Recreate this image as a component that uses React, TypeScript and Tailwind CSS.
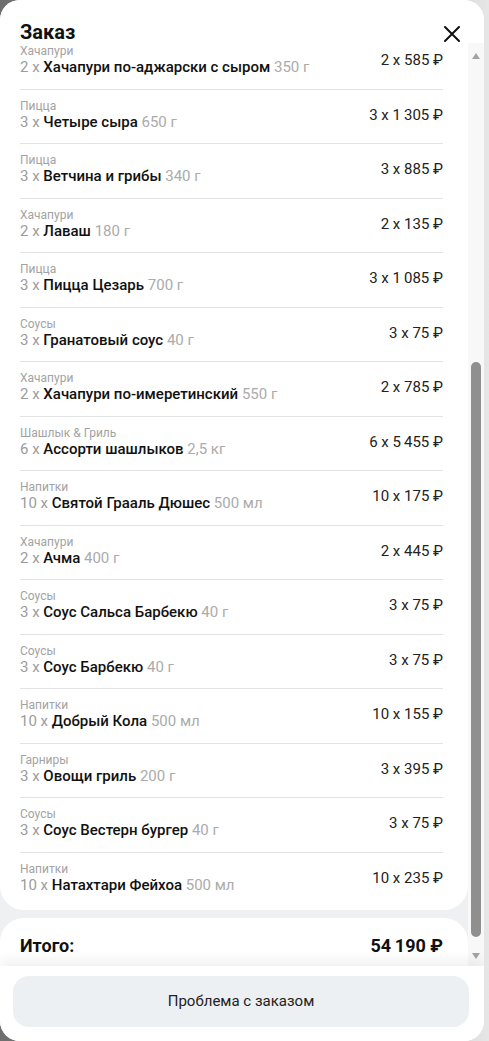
import { useLayoutEffect, useRef } from "react";

type Item = {
  cat: string;
  qty: number;
  name: string;
  weight: string;
  price: string;
};

const items: Item[] = [
  { cat: "Хачапури", qty: 2, name: "Хачапури по-аджарски с сыром", weight: "350 г", price: "585" },
  { cat: "Пицца", qty: 3, name: "Четыре сыра", weight: "650 г", price: "1\u2009305" },
  { cat: "Пицца", qty: 3, name: "Ветчина и грибы", weight: "340 г", price: "885" },
  { cat: "Хачапури", qty: 2, name: "Лаваш", weight: "180 г", price: "135" },
  { cat: "Пицца", qty: 3, name: "Пицца Цезарь", weight: "700 г", price: "1\u2009085" },
  { cat: "Соусы", qty: 3, name: "Гранатовый соус", weight: "40 г", price: "75" },
  { cat: "Хачапури", qty: 2, name: "Хачапури по-имеретинский", weight: "550 г", price: "785" },
  { cat: "Шашлык & Гриль", qty: 6, name: "Ассорти шашлыков", weight: "2,5 кг", price: "5\u2009455" },
  { cat: "Напитки", qty: 10, name: "Святой Грааль Дюшес", weight: "500 мл", price: "175" },
  { cat: "Хачапури", qty: 2, name: "Ачма", weight: "400 г", price: "445" },
  { cat: "Соусы", qty: 3, name: "Соус Сальса Барбекю", weight: "40 г", price: "75" },
  { cat: "Соусы", qty: 3, name: "Соус Барбекю", weight: "40 г", price: "75" },
  { cat: "Напитки", qty: 10, name: "Добрый Кола", weight: "500 мл", price: "155" },
  { cat: "Гарниры", qty: 3, name: "Овощи гриль", weight: "200 г", price: "395" },
  { cat: "Соусы", qty: 3, name: "Соус Вестерн бургер", weight: "40 г", price: "75" },
  { cat: "Напитки", qty: 10, name: "Натахтари Фейхоа", weight: "500 мл", price: "235" },
];

function Row({ item, last }: { item: Item; last: boolean }) {
  return (
    <div
      className={
        "flex items-center justify-between pt-[9px] pb-[12.5px] " +
        (last ? "" : "border-b border-[#e3e3e3]")
      }
    >
      <div className="flex flex-col">
        <span className="text-[12px] leading-[14px] text-[#a3a3a3]">{item.cat}</span>
        <span className="text-[15px] leading-[18px] text-[#9c9c9c]">
          {item.qty} x <span className="font-medium text-[#111]">{item.name}</span>{" "}
          <span className="text-[#ababab]">{item.weight}</span>
        </span>
      </div>
      <span className="text-[15px] leading-[18px] text-[#222] whitespace-nowrap">
        {item.qty} x {item.price} ₽
      </span>
    </div>
  );
}

// classic scrollbar look, drawn beside the list
function ScrollTrack() {
  return (
    <div className="w-[16px] shrink-0 bg-[#f8f8f8] flex flex-col items-center pt-[10px]">
      <div className="w-0 h-0 border-x-[4.5px] border-x-transparent border-b-[6px] border-b-[#a3a3a3]" />
      <div className="mt-[303px] w-[10px] h-[575px] rounded-full bg-[#8f8f8f]" />
      <div className="mt-[16px] w-0 h-0 border-x-[4.5px] border-x-transparent border-t-[6px] border-t-[#a3a3a3]" />
    </div>
  );
}

export default function App() {
  const scrollRef = useRef<HTMLDivElement>(null);

  useLayoutEffect(() => {
    const el = scrollRef.current;
    if (el) el.scrollTop = el.scrollHeight; // list is shown scrolled to the end
  }, []);

  return (
    <div
      className="h-[1041px] w-full bg-gradient-to-r from-[#6e6e6e] to-[#e6e6e6] flex"
      style={{ fontFamily: "Roboto, 'Noto Sans', sans-serif" }}
    >
      <div className="w-[484px] h-full bg-white rounded-[20px] overflow-hidden flex flex-col">
        {/* ---- Header ---- */}
        <div className="h-[43px] shrink-0 flex justify-between items-start pl-5 pr-[24px] bg-white">
          <h1 className="pt-[23px] text-[20px] leading-[18px] font-bold text-[#111]">Заказ</h1>
          <svg className="mt-[26px]" width="16" height="16" viewBox="0 0 16 16" fill="none">
            <path d="M1 1L15 15M15 1L1 15" stroke="#111" strokeWidth="2" strokeLinecap="round" />
          </svg>
        </div>

        {/* ---- Body ---- */}
        <div className="flex-1 min-h-0 flex">
          <div
            ref={scrollRef}
            className="flex-1 min-w-0 overflow-y-scroll bg-[#eef0f2] [scrollbar-width:none]"
          >
            <div className="flex flex-col gap-2">
              {/* order info block, scrolled out of view */}
              <div className="h-[440px] bg-white rounded-b-[24px]" />

              {/* Items */}
              <div className="bg-white rounded-[24px] pl-5 pr-[25px] pt-[25px] pb-[4px] flex flex-col">
                {items.map((it, i) => (
                  <Row key={i} item={it} last={i === items.length - 1} />
                ))}
              </div>

              {/* Total */}
              <div className="bg-white rounded-t-[24px] pl-5 pr-[25px] pt-4 pb-2 flex justify-between">
                <span className="text-[18px] leading-6 font-bold text-[#111]">Итого:</span>
                <span className="text-[18px] leading-6 font-bold text-[#111]">
                  54{"\u2009"}190 ₽
                </span>
              </div>
            </div>
          </div>
          <ScrollTrack />
        </div>

        {/* ---- Footer ---- */}
        <div className="relative z-10 shrink-0 bg-white pt-[10px] pl-[13px] pr-[15px] pb-[14px] shadow-[0_-6px_12px_rgba(0,0,0,0.06)]">
          <button className="w-full h-[51px] rounded-[16px] bg-[#edf0f2] text-[15px] text-[#222]">
            Проблема с заказом
          </button>
        </div>
      </div>
    </div>
  );
}
